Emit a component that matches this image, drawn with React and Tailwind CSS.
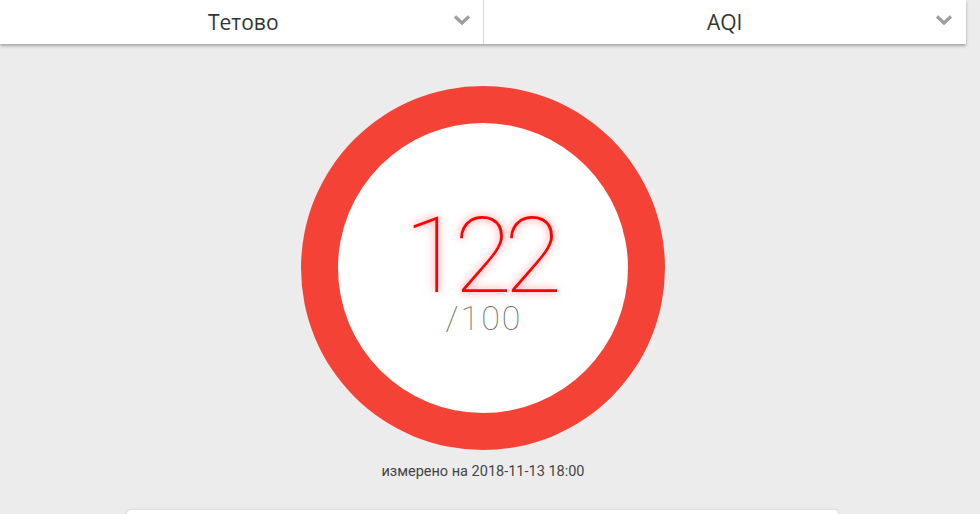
import React from "react";

function Chevron() {
  return (
    <svg width="18" height="12" viewBox="0 0 18 12" className="shrink-0">
      <path d="M2 2.5 L9 9 L16 2.5" fill="none" stroke="#9e9e9e" strokeWidth="3.2" strokeLinecap="butt" />
    </svg>
  );
}

export default function App() {
  return (
    <div className="w-[980px] h-[514px] overflow-hidden bg-[#ececec] relative" style={{ fontFamily: "'Open Sans', sans-serif" }}>
      <div className="flex w-[966px] h-[44px] bg-white shadow-[0_2px_3px_rgba(0,0,0,0.3)] relative z-10">
        <div className="flex-1 flex items-center relative border-r border-[#d6d6d6]">
          <span className="flex-1 text-center text-[21px] text-[#333] leading-none pl-[4px]">Тетово</span>
          <div className="absolute right-[12px] top-[14px]"><Chevron /></div>
        </div>
        <div className="flex-1 flex items-center relative">
          <span className="flex-1 text-center text-[21px] text-[#333] leading-none">AQI</span>
          <div className="absolute right-[13px] top-[14px]"><Chevron /></div>
        </div>
      </div>
      <div className="flex flex-col items-center pt-[42px]">
        <div className="ml-[-14px] w-[364px] h-[364px] rounded-full bg-[#f44336] flex items-center justify-center">
          <div className="w-[290px] h-[290px] rounded-full bg-white flex flex-col items-center justify-center pt-[12px]">
            <div
              className="text-[#ff0000] text-[106px] leading-[80px] font-thin tracking-[-8px] pr-[8px]"
              style={{ fontFamily: "Roboto, sans-serif", textShadow: "0 0 8px rgba(255,0,0,0.55)" }}
            >
              122
            </div>
            <div className="text-[#666] text-[34px] leading-[28px] font-thin mt-[8px] tracking-[2px] pl-[2px]" style={{ fontFamily: "Roboto, sans-serif" }}>
              /100
            </div>
          </div>
        </div>
        <div className="ml-[-14px] mt-[11px] text-[14.5px] text-[#444]" style={{ fontFamily: "Roboto, sans-serif" }}>
          измерено на 2018-11-13 18:00
        </div>
      </div>
      <div className="absolute left-[127px] top-[510px] w-[711px] h-[40px] bg-white rounded-[4px] shadow-[0_0_3px_rgba(0,0,0,0.15)]" />
    </div>
  );
}
